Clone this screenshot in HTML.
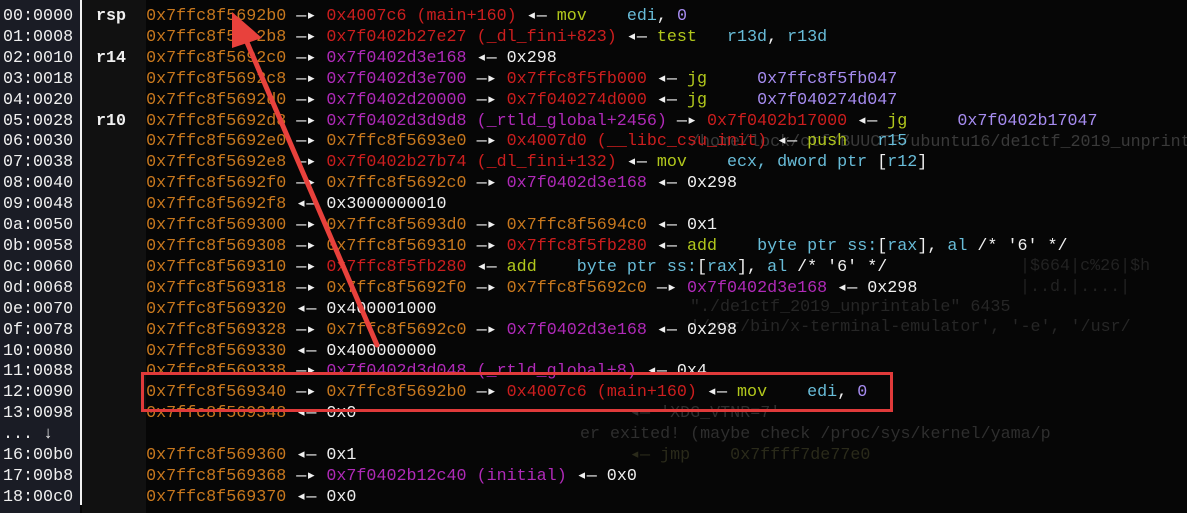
<!DOCTYPE html>
<html><head><meta charset="utf-8"><style>
html,body{margin:0;padding:0;background:#060606;width:1187px;height:513px;overflow:hidden;position:relative}
.f{font-family:"Liberation Mono","DejaVu Sans Mono",monospace;font-size:16.7px;white-space:pre;line-height:20.9px}
#left{position:absolute;left:0;top:0;width:80px;height:513px;background:#1a1c25}
#vl{position:absolute;left:80px;top:0;width:2px;height:505px;background:#f2f2f2}
#mid{position:absolute;left:82px;top:0;width:64px;height:513px;background:#111}
#idx{position:absolute;left:3px;top:7px;color:#f0f0f0}
#main{position:absolute;left:96px;top:7px;color:#f0f0f0}
.g{position:absolute;color:#2c2c2c}
.o{color:#c8781e}.r{color:#cc1e1e}.m{color:#b02ab8}.w{color:#f0f0f0}.y{color:#b2c81c}.c{color:#68bcd8}.p{color:#a68cf0}.b{font-weight:bold}
#box{position:absolute;left:141px;top:372px;width:746px;height:34px;border:3px solid #e03a3a}
</style></head><body>
<div id="left"></div><div id="mid"></div><div id="vl"></div>
<div class="f g" style="left:690px;top:133px;color:#3a3a3a">/home/lock/ctf/BUUCTF/ubuntu16/de1ctf_2019_unprint</div>
<div class="f g" style="left:690px;top:298px;color:#262626">"./de1ctf_2019_unprintable" 6435</div>
<div class="f g" style="left:690px;top:318px;color:#262626">'/usr/bin/x-terminal-emulator', '-e', '/usr/</div>
<div class="f g" style="left:630px;top:404px;color:#2e2e2e">◂— 'XDG_VTNR=7'</div>
<div class="f g" style="left:580px;top:425px;color:#2e2e2e">er exited! (maybe check /proc/sys/kernel/yama/p</div>
<div class="f g" style="left:630px;top:446px;color:#2a2a1a">◂— jmp    0x7ffff7de77e0</div>
<div class="f g" style="left:1020px;top:257px;color:#222">|$664|c%26|$h</div>
<div class="f g" style="left:1020px;top:278px;color:#222">|..d.|....|</div>
<div class="f" id="idx">00:0000
01:0008
02:0010
03:0018
04:0020
05:0028
06:0030
07:0038
08:0040
09:0048
0a:0050
0b:0058
0c:0060
0d:0068
0e:0070
0f:0078
10:0080
11:0088
12:0090
13:0098
... ↓
16:00b0
17:00b8
18:00c0</div>
<div class="f" id="main"><span class="b">rsp</span>  <span class="o">0x7ffc8f5692b0</span> —▸ <span class="r">0x4007c6 (main+160)</span> ◂— <span class="y">mov</span>    <span class="c">edi</span>, <span class="p">0</span>
     <span class="o">0x7ffc8f5692b8</span> —▸ <span class="r">0x7f0402b27e27 (_dl_fini+823)</span> ◂— <span class="y">test</span>   <span class="c">r13d</span>, <span class="c">r13d</span>
<span class="b">r14</span>  <span class="o">0x7ffc8f5692c0</span> —▸ <span class="m">0x7f0402d3e168</span> ◂— 0x298
     <span class="o">0x7ffc8f5692c8</span> —▸ <span class="m">0x7f0402d3e700</span> —▸ <span class="r">0x7ffc8f5fb000</span> ◂— <span class="y">jg</span>     <span class="p">0x7ffc8f5fb047</span>
     <span class="o">0x7ffc8f5692d0</span> —▸ <span class="m">0x7f0402d20000</span> —▸ <span class="r">0x7f040274d000</span> ◂— <span class="y">jg</span>     <span class="p">0x7f040274d047</span>
<span class="b">r10</span>  <span class="o">0x7ffc8f5692d8</span> —▸ <span class="m">0x7f0402d3d9d8 (_rtld_global+2456)</span> —▸ <span class="r">0x7f0402b17000</span> ◂— <span class="y">jg</span>     <span class="p">0x7f0402b17047</span>
     <span class="o">0x7ffc8f5692e0</span> —▸ <span class="o">0x7ffc8f5693e0</span> —▸ <span class="r">0x4007d0 (__libc_csu_init)</span> ◂— <span class="y">push</span>   <span class="c">r15</span>
     <span class="o">0x7ffc8f5692e8</span> —▸ <span class="r">0x7f0402b27b74 (_dl_fini+132)</span> ◂— <span class="y">mov</span>    <span class="c">ecx, dword ptr </span>[<span class="c">r12</span>]
     <span class="o">0x7ffc8f5692f0</span> —▸ <span class="o">0x7ffc8f5692c0</span> —▸ <span class="m">0x7f0402d3e168</span> ◂— 0x298
     <span class="o">0x7ffc8f5692f8</span> ◂— 0x3000000010
     <span class="o">0x7ffc8f569300</span> —▸ <span class="o">0x7ffc8f5693d0</span> —▸ <span class="o">0x7ffc8f5694c0</span> ◂— 0x1
     <span class="o">0x7ffc8f569308</span> —▸ <span class="o">0x7ffc8f569310</span> —▸ <span class="r">0x7ffc8f5fb280</span> ◂— <span class="y">add</span>    <span class="c">byte ptr ss:</span>[<span class="c">rax</span>], <span class="c">al</span> /* '6' */
     <span class="o">0x7ffc8f569310</span> —▸ <span class="r">0x7ffc8f5fb280</span> ◂— <span class="y">add</span>    <span class="c">byte ptr ss:</span>[<span class="c">rax</span>], <span class="c">al</span> /* '6' */
     <span class="o">0x7ffc8f569318</span> —▸ <span class="o">0x7ffc8f5692f0</span> —▸ <span class="o">0x7ffc8f5692c0</span> —▸ <span class="m">0x7f0402d3e168</span> ◂— 0x298
     <span class="o">0x7ffc8f569320</span> ◂— 0x400001000
     <span class="o">0x7ffc8f569328</span> —▸ <span class="o">0x7ffc8f5692c0</span> —▸ <span class="m">0x7f0402d3e168</span> ◂— 0x298
     <span class="o">0x7ffc8f569330</span> ◂— 0x400000000
     <span class="o">0x7ffc8f569338</span> —▸ <span class="m">0x7f0402d3d048 (_rtld_global+8)</span> ◂— 0x4
     <span class="o">0x7ffc8f569340</span> —▸ <span class="o">0x7ffc8f5692b0</span> —▸ <span class="r">0x4007c6 (main+160)</span> ◂— <span class="y">mov</span>    <span class="c">edi</span>, <span class="p">0</span>
     <span class="o">0x7ffc8f569348</span> ◂— 0x0

     <span class="o">0x7ffc8f569360</span> ◂— 0x1
     <span class="o">0x7ffc8f569368</span> —▸ <span class="m">0x7f0402b12c40 (initial)</span> ◂— 0x0
     <span class="o">0x7ffc8f569370</span> ◂— 0x0</div>
<div id="box"></div>
<svg style="position:absolute;left:0;top:0" width="1187" height="513">
<line x1="377" y1="345" x2="246" y2="40" stroke="#e8413c" stroke-width="5" stroke-linecap="round"/>
<polygon points="232,12 232,48 262,38" fill="#e8413c"/>
</svg>
</body></html>
